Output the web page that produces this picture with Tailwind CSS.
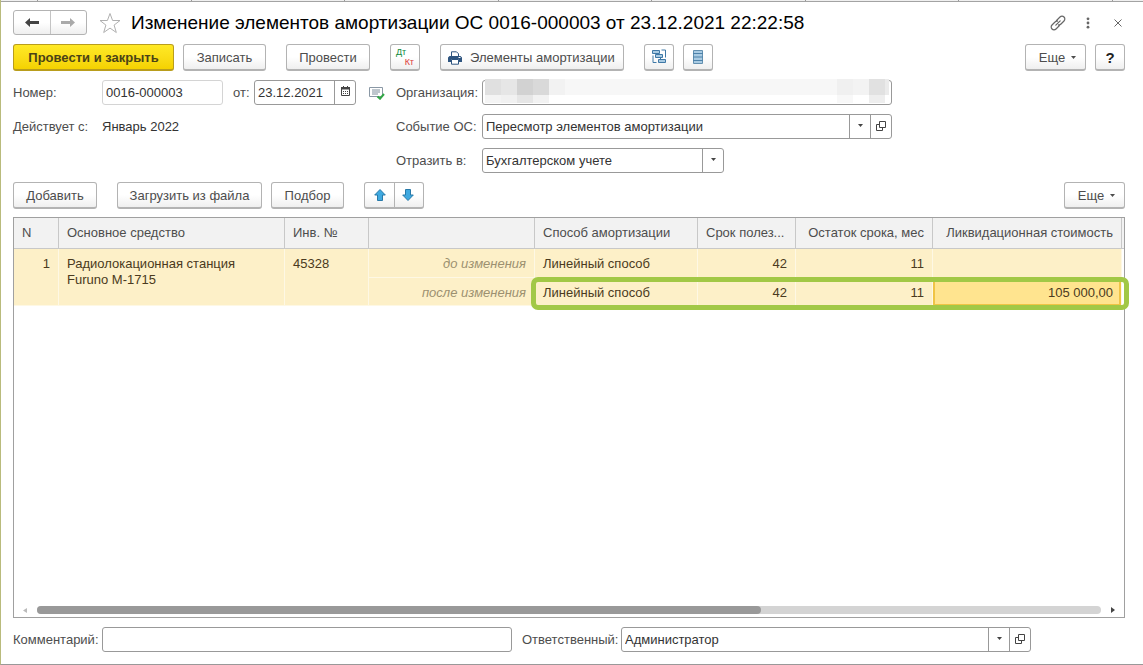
<!DOCTYPE html>
<html lang="ru">
<head>
<meta charset="utf-8">
<meta name="viewport" content="width=device-width, initial-scale=1">
<title>Изменение элементов амортизации ОС</title>
<script src="https://cdn.jsdelivr.net/npm/@tailwindcss/browser@4"></script>
</head>
<body class="bg-white font-['Liberation_Sans',Arial,sans-serif] text-[13px] leading-4 text-[#4d4d4d]">
<svg class="hidden" aria-hidden="true">
  <symbol id="caret" viewBox="0 0 5 3"><path d="M0 0h5L2.500 3z" fill="currentColor"/></symbol>
  <symbol id="open" viewBox="0 0 10 10"><path d="M3.500.5h6v6h-6zM3.500 3.500h-3v6h6v-3" fill="none" stroke="currentColor"/></symbol>
</svg>
<div class="flex min-h-screen flex-col border-b border-l border-b-[#999] border-l-[#b9bb7c]">
  <div class="flex h-[2px] shrink-0 justify-between border-b border-[#a3a3a3] bg-[#f0f0f0] pr-[30px] pl-9">
    <i class="w-px bg-[#999]"></i><i class="w-px bg-[#999]"></i><i class="w-px bg-[#999]"></i><i class="w-px bg-[#999]"></i><i class="w-px bg-[#999]"></i><i class="w-px bg-[#999]"></i><i class="w-px bg-[#999]"></i><i class="w-px bg-[#999]"></i>
  </div>
  <main class="flex flex-1 flex-col px-3 pt-2 pb-3 pr-[18px]">
    <header class="flex h-[25px] items-center">
      <div class="flex h-[25px] w-[74px] shrink-0 rounded-[3px] border border-[#b3b3b3] bg-linear-to-b from-white from-50% to-[#efefef]">
        <button aria-label="Назад" class="flex flex-1 items-center justify-center border-r border-[#c4c4c4]"><svg class="h-[9px] w-[14px]" viewBox="0 0 14 9"><path d="M0 4.500L5 0v3h9v3H5v3z" fill="#444"/></svg></button>
        <button aria-label="Вперед" class="flex flex-1 items-center justify-center"><svg class="h-[9px] w-[14px]" viewBox="0 0 14 9"><path d="M14 4.500L9 0v3H0v3h9v3z" fill="#aaa"/></svg></button>
      </div>
      <button aria-label="В избранное" class="ml-3 shrink-0"><svg class="h-[22px] w-[22px]" viewBox="0 0 22 22"><path d="M11 1.500l2.600 7h7.400l-5.900 4.600 2.200 7.400-6.300-4.400-6.300 4.400 2.200-7.400L1 8.500h7.400z" fill="#fff" stroke="#b0b0b0"/></svg></button>
      <h1 class="ml-[10px] flex-1 text-[19px] leading-6 whitespace-nowrap text-black">Изменение элементов амортизации ОС 0016-000003 от 23.12.2021 22:22:58</h1>
      <div class="flex items-center">
        <button aria-label="Ссылка"><svg class="h-4 w-4" viewBox="0 0 16 16" fill="none" stroke="#666" stroke-width="1.200" stroke-linecap="round"><path d="M6.500 5.500L10 2a2.700 2.700 0 0 1 4 4L11 9a2.600 2.600 0 0 1-2.500.8M9.500 10.500L6 14a2.700 2.700 0 0 1-4-4l3-3a2.600 2.600 0 0 1 2.500-.8"/><path d="M5.800 10.200l4.400-4.400"/></svg></button>
        <button aria-label="Меню" class="ml-5"><svg class="h-3 w-[4px]" viewBox="0 0 4 12" fill="#666"><circle cx="2" cy="1.800" r="1.400"/><circle cx="2" cy="6" r="1.400"/><circle cx="2" cy="10.200" r="1.400"/></svg></button>
        <button aria-label="Закрыть" class="mr-[3px] ml-[24px]"><svg class="h-2 w-2" viewBox="0 0 8 8"><path d="M.5.5l7 7M7.500.5l-7 7" stroke="#666"/></svg></button>
      </div>
    </header>

    <div class="mt-2 flex h-7 items-center">
      <button class="h-[27px] w-[161px] rounded-[3px] border border-b-2 border-[#b99d1c] bg-linear-to-b from-[#ffe925] to-[#f5d200] pt-[2px] font-bold whitespace-nowrap text-[#4a4216]">Провести и закрыть</button>
      <button class="ml-[9px] h-[27px] w-[83px] rounded-[3px] border border-b-2 border-[#b3b3b3] bg-linear-to-b from-white from-50% to-[#efefef] pt-[2px]">Записать</button>
      <button class="ml-5 h-[27px] w-[84px] rounded-[3px] border border-b-2 border-[#b3b3b3] bg-linear-to-b from-white from-50% to-[#efefef] pt-[2px]">Провести</button>
      <button class="ml-5 flex h-[27px] w-[30px] flex-col justify-center rounded-[3px] border border-b-2 border-[#b3b3b3] bg-linear-to-b from-white from-50% to-[#efefef] px-[5px] text-[9px] leading-[10px]"><span class="self-start text-[#0c8a3c]">Дт</span><span class="self-end text-[#dd3a3a]">Кт</span></button>
      <button class="ml-5 flex h-[27px] w-[184px] items-center rounded-[3px] border border-b-2 border-[#b3b3b3] bg-linear-to-b from-white from-50% to-[#efefef] pt-[2px] pl-[7px] whitespace-nowrap"><svg class="mr-2 h-[14px] w-[14px]" viewBox="0 0 14 14"><path d="M3.500 5V.8h5l2 2V5" fill="#fff" stroke="#2f5580"/><path d="M1.500 5h11L14 6.500V11h-3V8.500H3V11H0V6.500z" fill="#2f5580"/><path d="M3.500 8.500h7v4.700h-7z" fill="#fff" stroke="#2f5580"/><path d="M10.500 6.500h2" stroke="#fff"/></svg>Элементы амортизации</button>
      <button aria-label="Структура подчиненности" class="ml-5 flex h-[27px] w-[30px] items-center justify-center rounded-[3px] border border-b-2 border-[#b3b3b3] bg-linear-to-b from-white from-50% to-[#efefef]"><svg class="h-[15px] w-[15px]" viewBox="0 0 15 15" fill="#a9cbe3" stroke="#3f78a6"><path d="M.5 1.500h7v3h-7zM3.500 5.500h7v3h-7zM6.500 10.500h7v3h-7z"/><path d="M9.500 1h4v7.500M1 6.500v7h3.500M8.500 8.500v2" fill="none"/></svg></button>
      <button aria-label="Список" class="ml-[9px] flex h-[27px] w-[30px] items-center justify-center rounded-[3px] border border-b-2 border-[#b3b3b3] bg-linear-to-b from-white from-50% to-[#efefef]"><svg class="h-[14px] w-[10px]" viewBox="0 0 10 14"><path d="M.5.5h9v13h-9z" fill="#a9cbe3" stroke="#6390b0"/><path d="M0 3.500h10M0 7h10M0 10.500h10" stroke="#4d82aa"/></svg></button>
      <button class="ml-auto flex h-[27px] w-[61px] items-center justify-center gap-[6px] rounded-[3px] border border-b-2 border-[#b3b3b3] bg-linear-to-b from-white from-50% to-[#efefef] pt-[2px] pl-1">Еще<svg class="h-[3px] w-[5px]"><use href="#caret"/></svg></button>
      <button class="ml-[9px] h-[27px] w-[30px] rounded-[3px] border border-b-2 border-[#b3b3b3] bg-linear-to-b from-white from-50% to-[#efefef] pt-[2px] text-[15px] font-bold text-[#222]">?</button>
    </div>

    <div class="mt-[9px] flex">
      <div class="flex w-[383px] shrink-0 flex-col gap-[9px]">
        <div class="flex h-[25px] items-center">
          <label for="num" class="w-[89px]">Номер:</label>
          <input id="num" value="0016-000003" class="h-[25px] w-[121px] rounded-[3px] border border-[#d4d4d4] px-[3px] text-[#333]">
          <label for="date" class="ml-[10px] w-[21px]">от:</label>
          <div class="flex h-[25px] w-[102px] rounded-[3px] border border-[#999]">
            <input id="date" value="23.12.2021" class="w-[79px] pl-[3px] text-[#333]">
            <button aria-label="Календарь" class="flex flex-1 items-center justify-center border-l border-[#999] pb-[3px]"><svg class="h-[10px] w-[9px]" viewBox="0 0 9 10"><path d="M.5 1.500h8v8h-8z" fill="#fff" stroke="#444"/><path d="M0 1h9v2.500H0zM2 0h1v2H2zM6 0h1v2H6z" fill="#444"/><path d="M2 5.500h5M2 7.500h5" stroke="#444" stroke-dasharray="1 1"/></svg></button>
          </div>
          <svg class="ml-[13px] h-[14px] w-4" viewBox="0 0 16 14"><path d="M.5 1.500h13v9H.5z" fill="#fff" stroke="#8a98a5"/><path d="M3 4h8M3 6h8M3 8h6" stroke="#7e8e9c"/><path d="M8.500 10.500l2.500 2.200 4-4.700" fill="none" stroke="#32a746" stroke-width="2"/></svg>
        </div>
        <div class="flex h-[25px] items-center"><span class="w-[89px]">Действует с:</span><span class="text-[#333]">Январь 2022</span></div>
      </div>
      <div class="flex flex-1 flex-col gap-[9px]">
        <div class="flex h-[25px] items-center">
          <label for="org" class="w-[86px]">Организация:</label>
          <div class="relative h-[25px] w-[410px]">
            <input id="org" class="h-full w-full rounded-[3px] border border-[#999]">
            <div class="pointer-events-none absolute inset-x-[3px] -top-px bottom-px flex flex-col" aria-hidden="true">
              <div class="flex h-4"><i class="w-4 bg-[#e0e0e0]"></i><i class="w-4 bg-[#e6e6e6]"></i><i class="w-4 bg-[#d2d2d2]"></i><i class="w-4 bg-[#d9d9d9]"></i><i class="w-4 bg-[#f2f2f2]"></i><i class="flex-1 bg-[#f7f7f7]"></i><i class="w-4 bg-[#f0f0f0]"></i><i class="w-4 bg-[#f3f3f3]"></i><i class="w-4 bg-[#e1e1e1]"></i><i class="w-1 bg-[#ebebeb]"></i></div>
              <div class="flex h-2"><i class="w-4 bg-[#f4f4f4]"></i><i class="w-4 bg-[#f1f1f1]"></i><i class="w-4 bg-[#e6e6e6]"></i><i class="w-4 bg-[#f2f2f2]"></i><i class="flex-1"></i><i class="w-4 bg-[#f8f8f8]"></i><i class="w-4"></i><i class="w-4 bg-[#eeeeee]"></i><i class="w-1"></i></div>
            </div>
          </div>
        </div>
        <div class="flex h-[25px] items-center">
          <label for="event" class="w-[86px]">Событие ОС:</label>
          <div class="flex h-[25px] w-[410px] rounded-[3px] border border-[#999]">
            <select id="event" class="flex-1 appearance-none pl-[3px] text-[#333]"><option>Пересмотр элементов амортизации</option></select>
            <span class="flex w-[21px] items-center justify-center border-l border-[#999] pb-[2px] text-[#444]"><svg class="h-[3px] w-[5px]"><use href="#caret"/></svg></span>
            <button aria-label="Открыть" class="flex w-[21px] items-center justify-center border-l border-[#999] pb-[2px] text-[#444]"><svg class="h-[10px] w-[10px]"><use href="#open"/></svg></button>
          </div>
        </div>
        <div class="flex h-[25px] items-center">
          <label for="where" class="w-[86px]">Отразить в:</label>
          <div class="flex h-[25px] w-[242px] rounded-[3px] border border-[#999]">
            <select id="where" class="flex-1 appearance-none pl-[3px] text-[#333]"><option>Бухгалтерском учете</option></select>
            <span class="flex w-[21px] items-center justify-center border-l border-[#999] pb-[2px] text-[#444]"><svg class="h-[3px] w-[5px]"><use href="#caret"/></svg></span>
          </div>
        </div>
      </div>
    </div>

    <div class="mt-[9px] flex h-[27px] items-center">
      <button class="h-[27px] w-[84px] rounded-[3px] border border-b-2 border-[#b3b3b3] bg-linear-to-b from-white from-50% to-[#efefef] pt-px">Добавить</button>
      <button class="ml-5 h-[27px] w-[145px] rounded-[3px] border border-b-2 border-[#b3b3b3] bg-linear-to-b from-white from-50% to-[#efefef] pt-px whitespace-nowrap">Загрузить из файла</button>
      <button class="ml-[9px] h-[27px] w-[73px] rounded-[3px] border border-b-2 border-[#b3b3b3] bg-linear-to-b from-white from-50% to-[#efefef] pt-px">Подбор</button>
      <div class="ml-5 flex h-[27px] w-[60px] rounded-[3px] border border-b-2 border-[#b3b3b3] bg-linear-to-b from-white from-50% to-[#efefef]">
        <button aria-label="Вверх" class="flex w-[30px] items-center justify-center border-r border-[#b3b3b3]"><svg class="h-3 w-3" viewBox="0 0 12 12"><path d="M6 .5l5.300 5.500H8.500v5.500h-5V6H.7z" fill="#3fa9e0" stroke="#2879a8"/></svg></button>
        <button aria-label="Вниз" class="flex flex-1 items-center justify-center pr-[2px]"><svg class="h-3 w-3" viewBox="0 0 12 12"><path d="M6 11.500L.7 6h2.800V.5h5V6h2.800z" fill="#3fa9e0" stroke="#2879a8"/></svg></button>
      </div>
      <button class="ml-auto flex h-[27px] w-[61px] items-center justify-center gap-[6px] rounded-[3px] border border-b-2 border-[#b3b3b3] bg-linear-to-b from-white from-50% to-[#efefef] pt-px pl-1">Еще<svg class="h-[3px] w-[5px]"><use href="#caret"/></svg></button>
    </div>

    <section class="relative mt-2 flex flex-1 flex-col border border-[#a0a0a0]">
      <table class="w-full table-fixed border-separate border-spacing-0">
        <colgroup><col class="w-[45px]"><col><col class="w-[84px]"><col class="w-[166px]"><col class="w-[163px]"><col class="w-[98px]"><col class="w-[137px]"><col class="w-[189px]"><col class="w-[2px]"></colgroup>
        <thead>
          <tr class="h-[31px] bg-[#f2f2f2] text-left whitespace-nowrap *:border-b *:border-[#c8c8c8] *:font-normal">
            <th class="border-r px-2">N</th>
            <th class="border-r px-2">Основное средство</th>
            <th class="border-r px-2">Инв. №</th>
            <th class="border-r px-2"></th>
            <th class="border-r px-2">Способ амортизации</th>
            <th class="border-r px-2">Срок полез...</th>
            <th class="border-r px-2 text-right">Остаток срока, мес</th>
            <th class="border-r px-2 text-right">Ликвидационная стоимость</th>
            <th></th>
          </tr>
        </thead>
        <tbody class="text-[#4a3a20]">
          <tr class="h-[29px] bg-[#fdf0c8] align-top *:border-[#fef8e4] *:pt-[7px]">
            <td rowspan="2" class="border-r border-b px-2 text-right">1</td>
            <td rowspan="2" class="border-r border-b px-2">Радиолокационная станция<br>Furuno М-1715</td>
            <td rowspan="2" class="border-r border-b px-2">45328</td>
            <td class="border-r border-b px-2 text-right text-[#9c9070] italic">до изменения</td>
            <td class="border-r border-b px-2">Линейный способ</td>
            <td class="border-r border-b px-2 text-right">42</td>
            <td class="border-r border-b px-2 text-right">11</td>
            <td class="border-r border-b px-2"></td>
            <td class="bg-white"></td>
          </tr>
          <tr class="h-[28px] bg-[#fdf0c8] align-top *:border-[#fef8e4] *:pt-[7px]">
            <td class="border-r border-b px-2 text-right text-[#9c9070] italic">после изменения</td>
            <td class="border-r border-b px-2">Линейный способ</td>
            <td class="border-r border-b px-2 text-right">42</td>
            <td class="border-r border-b px-2 text-right">11</td>
            <td class="border-r bg-[#ffe48f] px-2 text-right inset-ring-2 inset-ring-[#f0c445]">105 000,00</td>
            <td class="bg-white"></td>
          </tr>
        </tbody>
      </table>
      <div class="pointer-events-none absolute top-[59px] -right-[5px] h-[33px] w-[598px] rounded-[7px] border-5 border-[#a2c846]"></div>
      <div class="mt-auto mb-[3px] flex h-2 items-center px-[9px]">
        <svg class="h-[5px] w-[4px]" viewBox="0 0 4 5"><path d="M4 0v5L0 2.500z" fill="#bbb"/></svg>
        <div class="mx-[10px] h-2 flex-1 rounded-full bg-[#d4d4d4]"><div class="h-2 w-[68%] rounded-full bg-[#999]"></div></div>
        <svg class="h-[6px] w-[4px]" viewBox="0 0 4 6"><path d="M0 0v6l4-3z" fill="#444"/></svg>
      </div>
    </section>

    <footer class="mt-[9px] flex h-[25px] items-center">
      <label for="comment" class="w-[89px] shrink-0">Комментарий:</label>
      <input id="comment" class="h-[25px] w-[410px] rounded-[3px] border border-[#999] px-[3px]">
      <label for="resp" class="ml-[10px] w-[99px] shrink-0">Ответственный:</label>
      <div class="flex h-[25px] w-[410px] rounded-[3px] border border-[#999]">
        <select id="resp" class="flex-1 appearance-none pl-[3px] text-[#333]"><option>Администратор</option></select>
        <span class="flex w-[21px] items-center justify-center border-l border-[#999] pb-[2px] text-[#444]"><svg class="h-[3px] w-[5px]"><use href="#caret"/></svg></span>
        <button aria-label="Открыть" class="flex w-[21px] items-center justify-center border-l border-[#999] pb-[2px] text-[#444]"><svg class="h-[10px] w-[10px]"><use href="#open"/></svg></button>
      </div>
    </footer>
  </main>
</div>
</body>
</html>
